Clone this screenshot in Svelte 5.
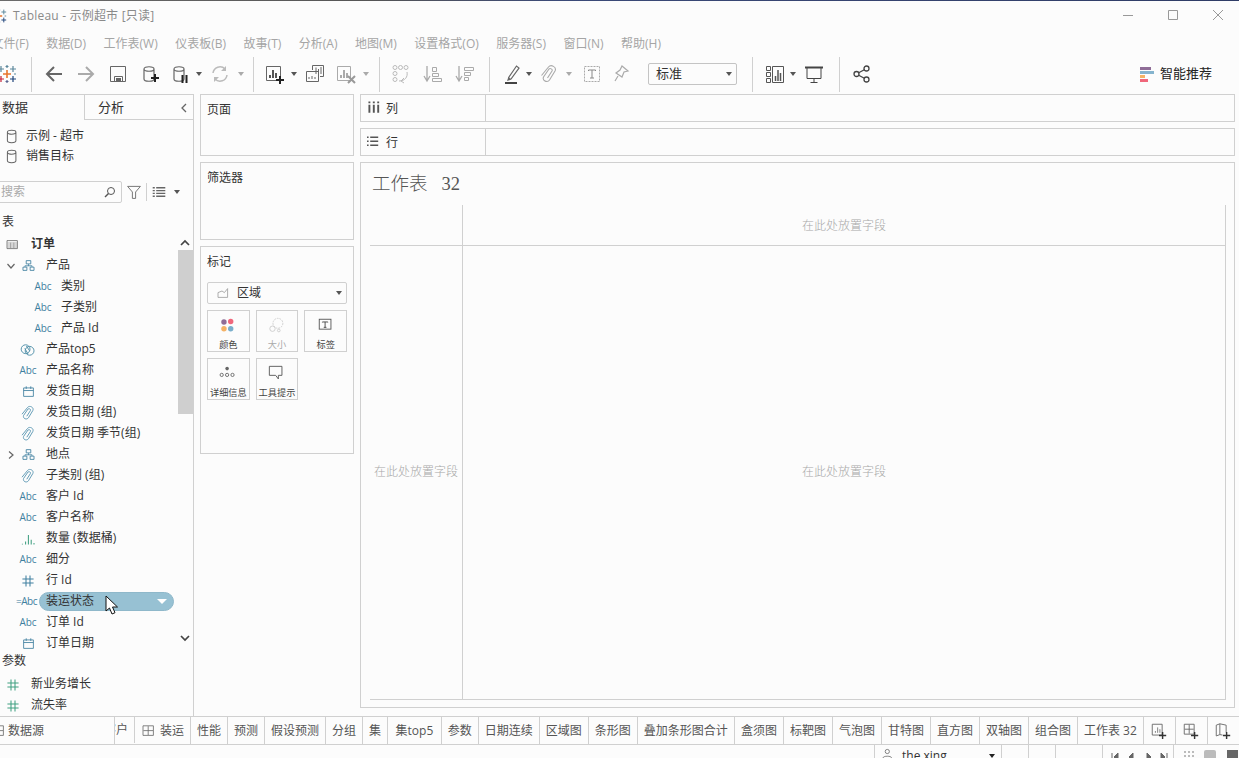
<script lang="ts">
  const MENU = ['文件(F)', '数据(D)', '工作表(W)', '仪表板(B)', '故事(T)', '分析(A)', '地图(M)', '设置格式(O)', '服务器(S)', '窗口(N)', '帮助(H)'];
  const TABS = ['性能', '预测', '假设预测', '分组', '集', '集top5', '参数', '日期连续', '区域图', '条形图', '叠加条形图合计', '盒须图', '标靶图', '气泡图', '甘特图', '直方图', '双轴图', '组合图', '工作表 32'];

  const FIELDS = [
    { lvl: 1, chev: 'down', icon: 'tree', name: '产品' },
    { lvl: 2, icon: 'abc', name: '类别' },
    { lvl: 2, icon: 'abc', name: '子类别' },
    { lvl: 2, icon: 'abc', name: '产品 Id' },
    { lvl: 1, icon: 'set', name: '产品top5' },
    { lvl: 1, icon: 'abc', name: '产品名称' },
    { lvl: 1, icon: 'date', name: '发货日期' },
    { lvl: 1, icon: 'clip', name: '发货日期 (组)' },
    { lvl: 1, icon: 'clip', name: '发货日期 季节(组)' },
    { lvl: 1, chev: 'right', icon: 'tree', name: '地点' },
    { lvl: 1, icon: 'clip', name: '子类别 (组)' },
    { lvl: 1, icon: 'abc', name: '客户 Id' },
    { lvl: 1, icon: 'abc', name: '客户名称' },
    { lvl: 1, icon: 'bins', name: '数量 (数据桶)' },
    { lvl: 1, icon: 'abc', name: '细分' },
    { lvl: 1, icon: 'hash', name: '行 Id' },
    { lvl: 1, icon: 'calc', name: '装运状态', pill: true },
    { lvl: 1, icon: 'abc', name: '订单 Id' },
    { lvl: 1, icon: 'date', name: '订单日期' },
  ];

  const CYL = (c: string) => `<path d="M4 5c0-3 10-3 10 0v10c0 3-10 3-10 0z M4 5c0 3 10 3 10 0" stroke="${c}" fill="none" stroke-width="1.2"/>`;
  const CLIP = 'M2.500 11.500L9.500 3C12 0 18 3 16 7l-5.500 9C8.500 19 3 17 4.500 13L10 5c1-1 4 0 3 2l-4.500 7';

  const ICONS: Record<string, string> = {
    back: '<path d="M18 10H3M10 3l-7 7 7 7" stroke="#666" stroke-width="2" fill="none"/>',
    fwd: '<path d="M2 10h15M10 3l7 7-7 7" stroke="#aaa" stroke-width="2" fill="none"/>',
    save: '<path d="M2.500 2.500h15v15h-15zM6.500 17.500v-5h8v5" stroke="#666" fill="none"/><rect x="8" y="14" width="5" height="3" fill="#666"/>',
    addds: CYL('#666') + '<path d="M15 10v8M11 14h8" stroke="#222" stroke-width="2"/>',
    pause: CYL('#666') + '<path d="M12.500 11v8M16.500 11v8" stroke="#222" stroke-width="2"/>',
    refresh: '<path d="M3 9a7 7 0 0 1 12-4M17 11a7 7 0 0 1-12 4" stroke="#bbb" stroke-width="1.500" fill="none"/><path d="M16 2v5h-5M4 18v-5h5" fill="#bbb"/>',
    newsheet: '<path d="M2.500 2.500h14v14h-14z" stroke="#666" fill="none"/><path d="M6 14v-3M9 14V6M12 14V9" stroke="#555" stroke-width="2"/><path d="M16 12v8M12 16h8" stroke="#222" stroke-width="2"/>',
    dup: '<path d="M7.500 6V1.500h11v11H15" stroke="#666" fill="none"/><path d="M1.500 7.500h12v10h-12z" fill="#fcfcfc" stroke="#666"/><path d="M11 10V3.500M13.500 10V5M16 10V3M4 15v-2M7 15v-3M10 15v-2" stroke="#666"/>',
    clear: '<path d="M1.500 2.500h13v14h-13z" stroke="#aaa" fill="none"/><path d="M5 14v-3M8 14V6M11 14V9" stroke="#aaa" stroke-width="2"/><path d="M12 12l7 7M19 12l-7 7" stroke="#999" stroke-width="2"/>',
    swap: '<g fill="none" stroke="#bbb"><circle cx="4" cy="3.500" r="2"/><circle cx="9.500" cy="3.500" r="2"/><circle cx="15" cy="3.500" r="2"/><circle cx="4" cy="9.500" r="2"/><circle cx="4" cy="15.500" r="2"/><path d="M16 8c1 5-2 9-8 9M13 14l-3 3 3 2"/></g>',
    sortup: '<path d="M4 2v14M1 12l3 5 3-5" stroke="#aaa" fill="none" stroke-width="1.300"/><path d="M9.500 3.500h4v4h-4zM9.500 9.500h6v3h-6zM9.500 14.500h9v3h-9z" stroke="#aaa" fill="none"/>',
    sortdown: '<path d="M4 2v14M1 12l3 5 3-5" stroke="#aaa" fill="none" stroke-width="1.300"/><path d="M9.500 3.500h9v3h-9zM9.500 8.500h6v3h-6zM9.500 13.500h4v3h-4z" stroke="#aaa" fill="none"/>',
    pen: '<path d="M6 13l-1 3 3-1 8-11-2.500-2z" stroke="#666" fill="none" stroke-width="1.200"/><path d="M5 13l3 2-3 1z" fill="#666"/><rect x="2" y="18" width="12" height="2" fill="#444"/>',
    attach: `<path d="${CLIP}" stroke="#aaa" fill="none" stroke-width="1.100"/>`,
    textbox: '<rect x="2.500" y="2.500" width="15" height="15" fill="none" stroke="#aaa" stroke-dasharray="2 1"/><path d="M6.500 7V6h7v1M10 6v8M8 14h4" stroke="#888" fill="none"/>',
    pin: '<path d="M11 2l6 5-4 1-2 5-6-4 4-3zM7 12l-3 5" stroke="#aaa" fill="none" stroke-width="1.200"/>',
    show: '<path d="M1.500 2.500h4v4h-4zM1.500 8.500h4v4h-4zM1.500 14.500h4v4h-4zM7.500 2.500h11v16h-11z" stroke="#555" fill="none"/><path d="M10.500 17v-5M13 17V6M15.500 17V9" stroke="#555" stroke-width="1.500"/>',
    present: '<path d="M1 3.500h18" stroke="#444" stroke-width="2"/><path d="M3 4v10.500h14V4M10 15v4M6.500 18.500h7" stroke="#444" fill="none"/>',
    share: '<g fill="none" stroke="#444" stroke-width="1.300"><circle cx="4.500" cy="10" r="2.500"/><circle cx="14.500" cy="4.500" r="2.500"/><circle cx="14.500" cy="15.500" r="2.500"/><path d="M6.700 8.800l5.600-3.100M6.700 11.200l5.600 3.100"/></g>',
    logo: '<g stroke-width="1.200" fill="none"><path d="M10 6v8M6 10h8" stroke="#e8762c" stroke-width="1.600"/><path d="M4 2v6M1 5h6M16 2v6M13 5h6" stroke="#5b879b"/><path d="M10 1v3M8.500 2.500h3" stroke="#5b879b"/><path d="M4 12v6M1 15h6" stroke="#c72035"/><path d="M16 12v6M13 15h6" stroke="#1f447a"/><path d="M10 16v3M8.500 17.500h3" stroke="#5b6591"/><path d="M1.500 9v2M17 10h2" stroke="#59879b"/></g>',
    funnel: '<path d="M2 3h16l-6 7v8h-4v-8z" fill="none" stroke="#666" stroke-width="1.100"/>',
    listview: '<path d="M1 3h3v2H1zM1 7h3v2H1zM1 11h3v2H1zM1 15h3v2H1zM6 3h13v2H6zM6 7h13v2H6zM6 11h13v2H6zM6 15h13v2H6z" fill="#666"/>',
    tree: '<path d="M6.500 2.500h7v5h-7zM1.500 12.500h6v5h-6zM12.500 12.500h6v5h-6zM10 8v2.500M4.500 12v-1.500h11V12" fill="none" stroke="#3f7f9f" stroke-width="1.300"/>',
    set: '<g fill="none" stroke="#4f8fa8" stroke-width="1.200"><circle cx="7" cy="9" r="5.500"/><circle cx="12" cy="11" r="5.500"/><path d="M8 5l4 6M6 8l4 7"/></g>',
    date: '<path d="M2.500 4.500h15v13h-15zM2.500 8.500h15M6.500 2v4M13.500 2v4" fill="none" stroke="#3f7f9f" stroke-width="1.300"/>',
    clip: `<path d="${CLIP}" fill="none" stroke="#5f9ab5" stroke-width="1.200"/>`,
    bins: '<path d="M3 17v-1M7 17v-4M10.500 17V5M14 17v-6M17.500 17v-2" stroke="#3f9f80" stroke-width="1.300" fill="none"/>',
    hash: '<path d="M7.500 3v14M12.500 3v14M3 7.500h14M3 12.500h14" stroke="#3f7f9f" stroke-width="1.300" fill="none"/>',
    hashg: '<path d="M7.500 3v14M12.500 3v14M3 7.500h14M3 12.500h14" stroke="#3f9f80" stroke-width="1.300" fill="none"/>',
    table: '<path d="M2.500 4.500h13v10h-13z" fill="none" stroke="#666"/><path d="M3 7.500h12M3 10h12M3 12.500h12M7 7v7M11 7v7" stroke="#888" stroke-width=".8"/>',
    cyl: CYL('#666'),
    area: '<path d="M2.500 15.500v-6l5-2 3 2 4-5v11z" fill="none" stroke="#999"/>',
    colorm: '<circle cx="5.500" cy="5.500" r="3" fill="#8f6d97"/><circle cx="13" cy="5" r="3" fill="#f0677b"/><circle cx="5.500" cy="13" r="3" fill="#f4b266"/><circle cx="13" cy="13" r="3" fill="#79aecb"/>',
    sizem: '<g fill="none" stroke="#ccc"><circle cx="11" cy="7" r="5.500" stroke-dasharray="2 1"/><circle cx="5" cy="13" r="3"/><circle cx="12" cy="15" r="1.500"/></g>',
    labelm: '<rect x="2.500" y="2.500" width="13" height="11" fill="none" stroke="#555"/><path d="M6 6V5.500h6V6M9 5.500v6M7.500 11.500h3" stroke="#444" fill="none"/>',
    detailm: '<circle cx="9" cy="4" r="2" fill="#666"/><g fill="none" stroke="#666"><circle cx="3" cy="11" r="1.800"/><circle cx="9" cy="11" r="1.800"/><circle cx="15" cy="11" r="1.800"/></g>',
    tipm: '<path d="M1.500 1.500h14v10h-4v4l-3-4h-7z" fill="none" stroke="#555"/>',
    columns: '<path d="M3 6v10M8.500 6v10M14 6v10" stroke="#555" stroke-width="2.400"/><path d="M3 2v2M8.500 2v2M14 2v2" stroke="#555" stroke-width="2.400"/>',
    rows: '<path d="M4 4h10M4 9h10M4 14h10" stroke="#555" stroke-width="1.800"/><path d="M0 4h2M0 9h2M0 14h2" stroke="#555" stroke-width="1.800"/>',
    newsh: '<path d="M2.500 2.500h11v12h-11z" fill="none" stroke="#666"/><path d="M6 12v-2M8.500 12V6M11 12V8" stroke="#777"/><path d="M14 11v8M10 15h8" stroke="#333" stroke-width="1.600"/>',
    newdb: '<path d="M2.500 2.500h11v11h-11zM8 3v10M3 8h10" fill="none" stroke="#666"/><path d="M14 11v8M10 15h8" stroke="#333" stroke-width="1.600"/>',
    newst: '<path d="M2.500 3.500l4-1.500v12l-4 1.500zM6.500 2l7 1.500v8M6.500 14l3 .5" fill="none" stroke="#666"/><path d="M14 11v8M10 15h8" stroke="#333" stroke-width="1.600"/>',
    grid: '<path d="M2.500 3.500h13v12h-13zM9 4v11M3 9.500h12" fill="none" stroke="#666"/>',
    user: '<circle cx="9" cy="5" r="3" fill="none" stroke="#555"/><path d="M3 17v-3c0-3 12-3 12 0v3" fill="none" stroke="#555"/>',
  };
</script>

{#snippet icon(name: string, size: number = 20)}
  <svg class="ico" width={size} height={size} viewBox="0 0 20 20">{@html ICONS[name]}</svg>
{/snippet}

{#snippet tb(name: string, cls: string = 'w32')}
  <span class="tb {cls}">{@render icon(name)}</span>
{/snippet}

{#snippet dd(light: boolean = false)}
  <span class="tb dd"><i class="caret" class:light></i></span>
{/snippet}

{#snippet fieldIcon(name: string)}
  {#if name === 'abc'}<span class="abc">Abc</span>
  {:else if name === 'calc'}<span class="abc calc">=Abc</span>
  {:else}{@render icon(name, name === 'tree' || name === 'date' ? 13 : 16)}{/if}
{/snippet}

<div class="app">
  <div class="strip"></div>

  <header class="title">
    <span class="applogo">{@render icon('logo', 16)}</span>
    <span class="caption">Tableau - 示例超市 [只读]</span>
    <span class="winbtns">
      <svg width="12" height="12" viewBox="0 0 12 12"><path d="M1 6.500h10" stroke="#999"/></svg>
      <svg width="12" height="12" viewBox="0 0 12 12"><path d="M1.500 1.500h9v9h-9z" stroke="#999" fill="none"/></svg>
      <svg width="12" height="12" viewBox="0 0 12 12"><path d="M1 1l10 10M11 1L1 11" stroke="#999" fill="none"/></svg>
    </span>
  </header>

  <nav class="menu">
    {#each MENU as m}<span>{m}</span>{/each}
  </nav>

  <div class="toolbar">
    <div class="group g0">{@render tb('logo', 'w20')}</div>
    <div class="group g1">
      {@render tb('back')}{@render tb('fwd')}{@render tb('save')}{@render tb('addds')}
      {@render tb('pause', 'w28')}{@render dd()}{@render tb('refresh')}{@render dd(true)}
    </div>
    <div class="group g2">
      {@render tb('newsheet', 'w30')}{@render dd()}{@render tb('dup')}{@render tb('clear', 'w30')}{@render dd(true)}
    </div>
    <div class="group g3">
      {@render tb('swap')}{@render tb('sortup')}{@render tb('sortdown')}
    </div>
    <div class="group g4">
      {@render tb('pen', 'w22')}{@render dd()}{@render tb('attach', 'w30')}{@render dd(true)}
      {@render tb('textbox', 'w36')}{@render tb('pin', 'w22')}
      <span class="fit">标准<i class="caret"></i></span>
    </div>
    <div class="group g5">
      {@render tb('show', 'w26')}{@render dd()}{@render tb('present')}
    </div>
    <div class="group g6">
      {@render tb('share')}
      <span class="smart">
        <span class="bars"><b class="b1"></b><b class="b2"></b><b class="b3"></b><b class="b4"></b></span>
        智能推荐
      </span>
    </div>
  </div>

  <main class="main">
    <aside class="data">
      <div class="panetabs">
        <span class="ptab on">数据</span>
        <span class="ptab">分析<svg width="10" height="12" viewBox="0 0 10 12"><path d="M7 2L3 6l4 4" stroke="#666" stroke-width="1.300" fill="none"/></svg></span>
      </div>
      <div class="sources">
        <div class="src">{@render icon('cyl', 17)}示例 - 超市</div>
        <div class="src">{@render icon('cyl', 17)}销售目标</div>
      </div>
      <div class="searchrow">
        <span class="search">搜索<svg width="12" height="12" viewBox="0 0 12 12"><circle cx="7" cy="5" r="3.500" stroke="#555" fill="none"/><path d="M4.500 7.500L1 11" stroke="#555" stroke-width="1.400"/></svg></span>
        {@render icon('funnel', 16)}
        <span class="vsep"></span>
        {@render icon('listview', 14)}
        <i class="caret"></i>
      </div>
      <div class="heading">表</div>
      <div class="fields">
        <div class="row top">
          <span class="slot">{@render icon('table', 16)}</span><b>订单</b>
        </div>
        {#each FIELDS as f}
          <div class="row">
            <span class="indent l{f.lvl}">
              {#if f.chev === 'down'}<svg width="10" height="10" viewBox="0 0 10 10"><path d="M1.500 3l3.500 4 3.500-4" stroke="#666" stroke-width="1.200" fill="none"/></svg>{/if}
              {#if f.chev === 'right'}<svg width="10" height="10" viewBox="0 0 10 10"><path d="M3 1.500l4 3.500-4 3.500" stroke="#666" stroke-width="1.200" fill="none"/></svg>{/if}
            </span>
            <span class="slot">{@render fieldIcon(f.icon)}</span>
            {#if f.pill}
              <span class="pill"><span>{f.name}</span><i class="caret white"></i></span>
              <svg class="cursor" width="14" height="20" viewBox="0 0 14 20"><path d="M1 1v15l3.500-3 2.500 6 3-1.300-2.500-5.700h5z" fill="#fff" stroke="#111"/></svg>
            {:else}
              <span class="name">{f.name}</span>
            {/if}
          </div>
        {/each}
        <div class="scroll">
          <svg width="10" height="8" viewBox="0 0 10 8"><path d="M1 6l4-4 4 4" stroke="#444" stroke-width="1.700" fill="none"/></svg>
          <span class="thumb"></span>
          <svg class="dn" width="10" height="8" viewBox="0 0 10 8"><path d="M1 2l4 4 4-4" stroke="#444" stroke-width="1.700" fill="none"/></svg>
        </div>
      </div>
      <div class="heading param">参数</div>
      <div class="row"><span class="slot">{@render icon('hashg', 16)}</span>新业务增长</div>
      <div class="row"><span class="slot">{@render icon('hashg', 16)}</span>流失率</div>
    </aside>

    <section class="cards">
      <div class="card pages">页面</div>
      <div class="card filters">筛选器</div>
      <div class="card marks">
        标记
        <div class="marktype">{@render icon('area', 16)}<span>区域</span><i class="caret"></i></div>
        <div class="markgrid">
          <div class="mk">{@render icon('colorm', 18)}<span>颜色</span></div>
          <div class="mk off">{@render icon('sizem', 18)}<span>大小</span></div>
          <div class="mk">{@render icon('labelm', 18)}<span>标签</span></div>
          <div class="mk">{@render icon('detailm', 18)}<span>详细信息</span></div>
          <div class="mk">{@render icon('tipm', 18)}<span>工具提示</span></div>
        </div>
      </div>
    </section>

    <section class="work">
      <div class="shelf"><div class="shelflabel">{@render icon('columns', 16)}<span>列</span></div></div>
      <div class="shelf"><div class="shelflabel">{@render icon('rows', 16)}<span>行</span></div></div>
      <div class="viz">
        <h1>工作表&nbsp;&nbsp; 32</h1>
        <div class="frame">
          <div class="corner"></div>
          <div class="drop topdrop">在此处放置字段</div>
          <div class="drop leftdrop">在此处放置字段</div>
          <div class="drop">在此处放置字段</div>
        </div>
      </div>
    </section>
  </main>

  <div class="tabs">
    <div class="tab ds">{@render icon('grid', 16)}<span>数据源</span></div>
    <div class="tab clip"><span>客户</span></div>
    <div class="tab sh">{@render icon('grid', 16)}<span>装运</span></div>
    {#each TABS as t}<div class="tab" class:wide={t === '集top5'}>{t}</div>{/each}
    <div class="tab add">{@render icon('newsh', 18)}</div>
    <div class="tab add">{@render icon('newdb', 18)}</div>
    <div class="tab add">{@render icon('newst', 18)}</div>
  </div>

  <footer class="status">
    <div class="cell user">{@render icon('user', 14)}<span>the xing</span><i class="caret dark"></i></div>
    <div class="cell w27"></div>
    <div class="cell w27"></div>
    <div class="cell w47"></div>
    <div class="cell nav">
      <svg width="58" height="10" viewBox="0 0 58 10"><path d="M1 1v8M7 1L3 5l4 4zM22 1l-4 4 4 4zM36 1l4 4-4 4zM50 1l4 4-4 4zM56 1v8" fill="#666" stroke="#666"/></svg>
    </div>
    <div class="views"><span class="v1"></span><span class="v2"></span><span class="v3"></span></div>
  </footer>
</div>

<style>
  :global(body) { background: #fcfcfc; }
  .app {
    width: 1239px; height: 758px; overflow: hidden; background: #fcfcfc; color: #333;
    font: 12px/1.2 "Open Sans", "Noto Sans CJK SC", sans-serif;
    display: flex; flex-direction: column;
  }
  .ico { flex: none; display: block; }
  .strip { height: 1px; background: linear-gradient(90deg, #6b6b6b, #555 30%, #3b4a78 45%, #2f3c66); }

  .title { height: 30px; display: flex; align-items: center; padding-left: 0; }
  .applogo { margin-left: -9px; margin-right: 6px; }
  .caption { font-size: 12px; color: #8a8a8a; letter-spacing: .2px; }
  .winbtns { margin-left: auto; display: flex; gap: 33px; padding-right: 15px; margin-top: -2px; }

  .menu { height: 25px; box-sizing: border-box; padding-top: 1px; display: flex; gap: 17.500px; align-items: center; color: #a5a5a5; margin-left: -8.500px; font-size: 12px; }

  .caret { display: block; width: 0; height: 0; border: 3.500px solid transparent; border-top: 4px solid #555; border-bottom: 0; flex: none; }
  .caret.light { border-top-color: #aaa; }
  .caret.white { border-top-color: #fff; border-width: 5px; border-bottom: 0; }
  .caret.dark { border-top-color: #222; }

  .toolbar { height: 38px; box-sizing: border-box; padding-bottom: 2px; display: flex; align-items: center; flex: none; }
  .group { height: 35px; display: flex; align-items: center; border-right: 1px solid #d0d0d0; flex: none; }
  .tb { display: flex; align-items: center; justify-content: center; flex: none; height: 30px; }
  .w36 { width: 36px; } .w32 { width: 32px; } .w30 { width: 30px; } .w28 { width: 28px; }
  .w26 { width: 26px; } .w22 { width: 22px; } .w20 { width: 20px; } .dd { width: 10px; }
  .g0 { width: 31px; }
  .g0 .tb { margin-left: -3px; }
  .g1 { padding: 0 7px 0 6px; }
  .g2 { padding: 0 8px 0 5px; }
  .g3 { padding: 0 8px 0 5px; }
  .g4 { padding: 0 15px 0 12px; }
  .g5 { padding: 0 9px; }
  .g6 { border-right: 0; flex: 1; padding-left: 6px; padding-right: 27px; }
  .fit {
    display: flex; align-items: center; justify-content: space-between; width: 89px; height: 22px; font-size: 13px;
    padding: 0 4px 0 7px; box-sizing: border-box; border: 1px solid #c4c4c4; border-radius: 2px; margin-left: 16px; color: #333;
  }
  .smart { margin-left: auto; display: flex; align-items: center; gap: 6px; font-size: 13px; color: #222; }
  .bars { display: flex; flex-direction: column; gap: 1px; width: 14px; }
  .bars b { height: 3px; display: block; }
  .b1 { width: 11px; background: #8f6d97; } .b2 { width: 14px; background: #85b4ce; }
  .b3 { width: 5px; background: #f4b266; } .b4 { width: 8px; background: #f0677b; }

  .main { flex: 1; min-height: 0; display: flex; align-items: stretch; }
  .data { width: 194px; border-right: 1px solid #d0d0d0; border-top: 1px solid #d0d0d0; flex: none; display: flex; flex-direction: column; height: 622px; overflow: hidden; box-sizing: border-box; }
  .panetabs { display: flex; height: 25px; flex: none; }
  .ptab { display: flex; align-items: center; justify-content: space-between; box-sizing: border-box; font-size: 13px; padding-top: 1px; }
  .ptab.on { width: 84px; padding-left: 2px; }
  .ptab:not(.on) { flex: 1; border-left: 1px solid #d0d0d0; border-bottom: 1px solid #d0d0d0; padding: 1px 4px 0 13px; }
  .sources { padding-top: 6px; }
  .src { height: 20px; display: flex; align-items: center; gap: 5px; padding-left: 4px; }
  .searchrow { display: flex; align-items: center; height: 22px; margin-top: 15px; gap: 3px; }
  .search {
    width: 127px; height: 22px; margin-left: -5px; margin-right: 1px; box-sizing: border-box; border: 1px solid #d0d0d0; border-radius: 2px;
    color: #aaa; display: flex; align-items: center; justify-content: space-between; padding: 0 5px 0 5px; flex: none;
  }
  .vsep { width: 1px; height: 18px; background: #d0d0d0; margin: 0 2px 0 1px; }
  .searchrow .caret { margin-left: 5px; }
  .heading { height: 20px; padding-left: 2px; display: flex; align-items: center; margin-top: 9px; flex: none; }
  .fields { position: relative; height: 415px; overflow: hidden; flex: none; margin-top: 2px; }
  .row { position: relative; height: 21px; display: flex; align-items: center; white-space: nowrap; flex: none; }
  .row > .slot { width: 24px; display: flex; justify-content: center; margin-right: 6px; flex: none; }
  .data > .row, .row.top { padding-left: 1px; }
  .indent { display: flex; align-items: center; padding-left: 6px; box-sizing: border-box; flex: none; }
  .l1 { width: 16px; } .l2 { width: 31px; }
  .abc { font: 10px "Open Sans", sans-serif; color: #3f7f9f; white-space: nowrap; margin-top: -2px; }
  .calc { letter-spacing: -.5px; margin-left: -3px; }
  .pill {
    position: absolute; left: 39px; top: 1px; width: 135px; height: 19px; border-radius: 10px;
    background: #97c1d3; border: 1px solid #8fb8ca; box-sizing: border-box; display: flex; align-items: center; justify-content: space-between;
    padding: 0 6px 0 6px;
  }
  .cursor { position: absolute; left: 105px; top: 4px; }
  .scroll { position: absolute; right: 0; top: 0; width: 16px; height: 100%; display: flex; flex-direction: column; align-items: center; }
  .scroll svg { margin-top: 5px; flex: none; }
  .thumb { width: 15px; height: 164px; background: #cfcfcf; margin-top: 3px; flex: none; }
  .scroll .dn { margin-top: 220px; }
  .param { margin-top: 2px; margin-bottom: 3px; }

  .cards { width: 154px; margin-left: 6px; flex: none; display: flex; flex-direction: column; gap: 6px; }
  .card { border: 1px solid #d0d0d0; box-sizing: border-box; padding: 8px 6px; width: 154px; flex: none; }
  .pages { height: 62px; }
  .filters { height: 78px; }
  .marks { height: 208px; }
  .marktype {
    display: flex; align-items: center; height: 22px; box-sizing: border-box; margin-top: 13px; border: 1px solid #d0d0d0; border-radius: 2px;
    padding: 0 4px 0 8px; gap: 5px;
  }
  .marktype span { flex: 1; }
  .markgrid { display: grid; grid-template-columns: repeat(3, 1fr); gap: 6px; margin-top: 6px; }
  .mk {
    height: 42px; border: 1px solid #d0d0d0; box-sizing: border-box; display: flex; flex-direction: column; align-items: center;
    padding-top: 6px; font-size: 9.200px; gap: 4px; white-space: nowrap; color: #444;
  }
  .mk.off { color: #aaa; }

  .work { flex: none; width: 875px; margin-left: 6px; display: flex; flex-direction: column; gap: 6px; }
  .shelf { height: 28px; border: 1px solid #d0d0d0; box-sizing: border-box; flex: none; }
  .shelflabel { width: 125px; height: 100%; box-sizing: border-box; border-right: 1px solid #d0d0d0; display: flex; align-items: center; gap: 3px; padding-left: 6px; }
  .shelflabel span { padding-top: 2px; }
  .viz { height: 546px; border: 1px solid #d0d0d0; box-sizing: border-box; padding: 0 8px 7px 9px; display: flex; flex-direction: column; flex: none; }
  .viz h1 { margin: 0; font: 300 18.500px/1 "Liberation Serif", "Noto Sans CJK SC", serif; color: #555; height: 42px; padding: 12px 0 0 2px; box-sizing: border-box; flex: none; }
  .frame {
    flex: 1; display: grid; grid-template-columns: 93px 1fr; grid-template-rows: 41px 1fr;
    border-right: 1px solid #d0d0d0; border-bottom: 1px solid #d0d0d0;
  }
  .corner { border-right: 1px solid #d0d0d0; border-bottom: 1px solid #d0d0d0; }
  .drop { display: flex; align-items: center; justify-content: center; color: #a8a8a8; font-weight: 300; }
  .topdrop { border-bottom: 1px solid #d0d0d0; padding-top: 2px; }
  .leftdrop { border-right: 1px solid #d0d0d0; white-space: nowrap; }

  .tabs { height: 29px; flex: none; display: flex; border-top: 1px solid #d0d0d0; border-bottom: 1px solid #d0d0d0; box-sizing: border-box; color: #555; margin-top: -13px; }
  .tab { display: flex; align-items: center; padding: 1px 6px 0; box-sizing: content-box; height: 26px; border-right: 1px solid #d0d0d0; white-space: nowrap; flex: none; }
  .tab.wide { padding: 1px 7.500px 0; }
  .ds { width: 114px; padding: 1px 0 0; gap: 1px; }
  .ds .ico { margin-left: -9px; }
  .clip { width: 20px; padding: 1px 6px 0 0; box-sizing: border-box; justify-content: flex-end; overflow: hidden; }
  .sh { gap: 3px; }
  .add { padding: 0 7px 0 6px; height: 27px; }

  .status { height: 13px; flex: none; display: flex; justify-content: flex-end; overflow: hidden; }
  .cell { height: 100%; border-left: 1px solid #d0d0d0; box-sizing: border-box; flex: none; display: flex; align-items: flex-start; }
  .user { width: 127px; padding: 3px 6px 0; gap: 7px; color: #333; font-size: 12px; }
  .user span { margin-top: 1px; }
  .user .caret { margin: 6px 0 0 auto; }
  .w27 { width: 27px; } .w47 { width: 47px; }
  .nav { width: 71px; padding: 7px 0 0 8px; }
  .views { width: 66px; border-left: 1px solid #d0d0d0; display: flex; align-items: flex-start; padding: 5px 0 0 9px; gap: 9px; box-sizing: border-box; }
  .views span { display: block; height: 10px; }
  .v1 { width: 11px; background: radial-gradient(#bbb 1px, transparent 1.300px) 0 0/4px 4px; }
  .v2 { width: 12px; background: #bbb; border-radius: 2px; margin-left: 1px; }
  .v3 { width: 11px; background: #666; margin-left: 2px; }
</style>
